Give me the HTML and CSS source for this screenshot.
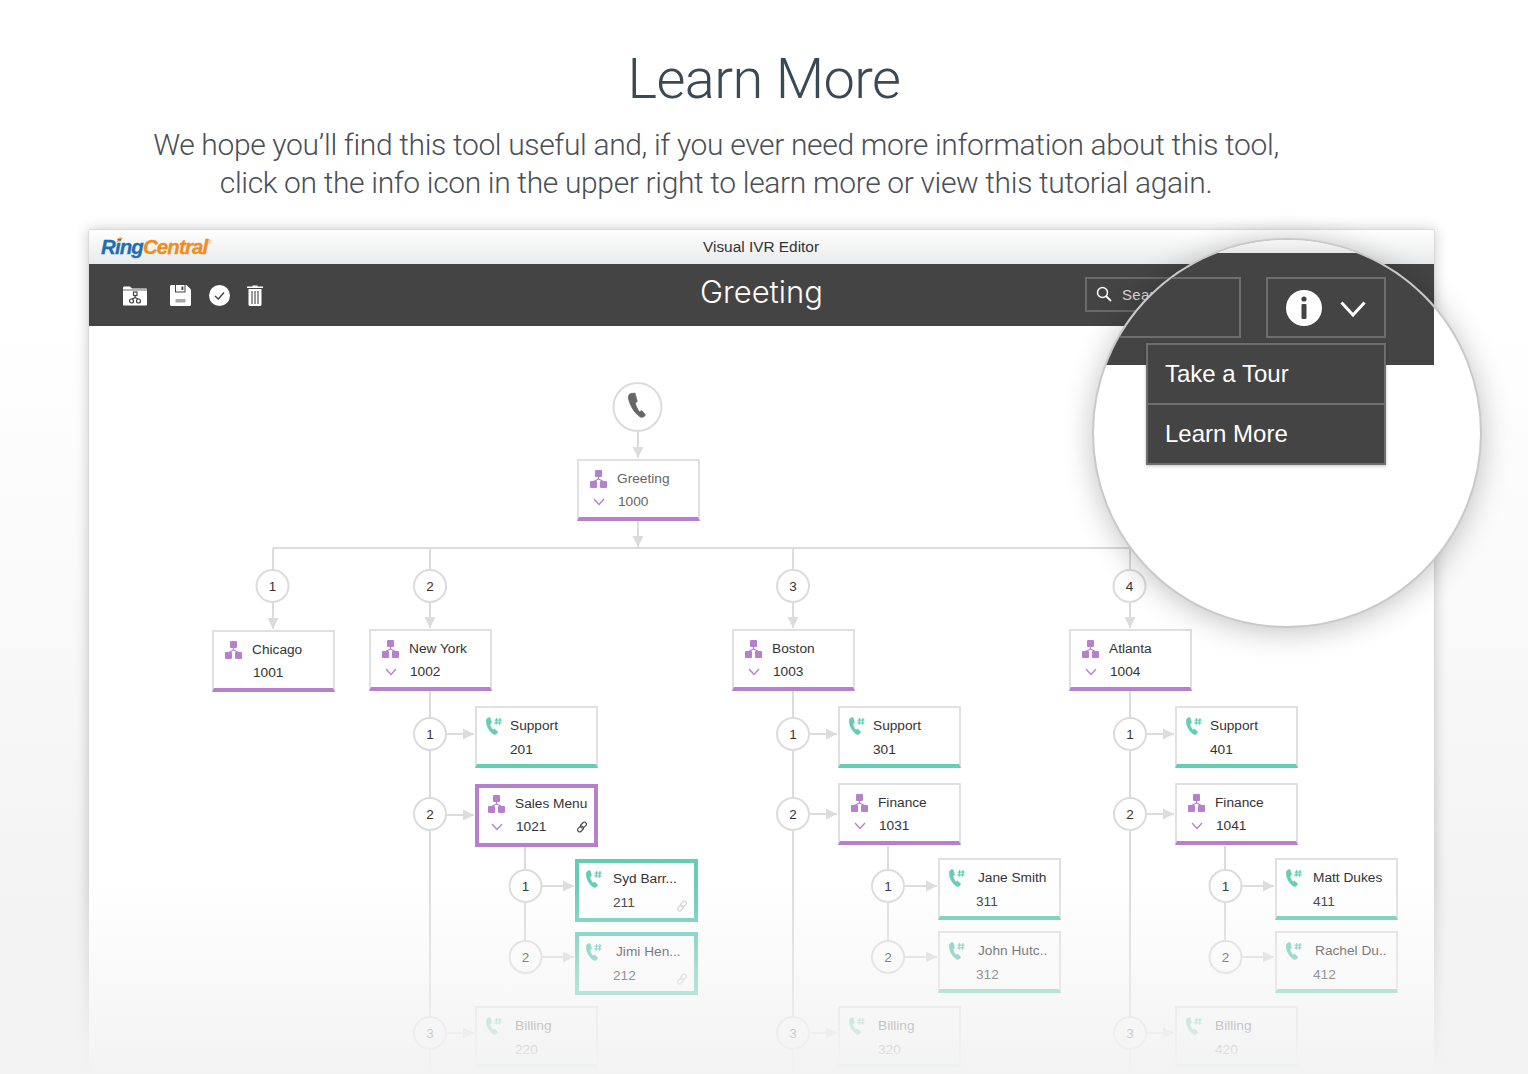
FILE: index.html
```html
<!DOCTYPE html>
<html lang="en">
<head>
    <meta charset="UTF-8">
    <title>Learn More</title>
    <link rel="stylesheet" href="styles.css">
</head>
<body>
    <svg class="defs" width="0" height="0">
        <defs>
            <symbol id="i-org" viewBox="0 0 17 18">
                <rect x="5" y="0" width="7" height="7" rx="1"/>
                <rect x="0" y="11" width="7" height="7" rx="1"/>
                <rect x="10" y="11" width="7" height="7" rx="1"/>
                <path d="M8.5 7V9M8.5 9L3.5 11.5M8.5 9L13.5 11.5" fill="none" stroke="currentColor" stroke-width="1.2"/>
            </symbol>
            <symbol id="i-chev" viewBox="0 0 12 8">
                <path d="M1 1L6 6.5L11 1" fill="none" stroke="currentColor" stroke-width="1.3"/>
            </symbol>
            <symbol id="i-ext" viewBox="0 0 16 18">
                <path d="M2.6 0.5C1 1.2 0 2.600 0.2 5C0.8 10 3.600 14.600 7.600 17.200C9 18 10.600 17.400 11.600 15.600C11.800 15.200 11.700 14.900 11.400 14.600L8.800 12.200C8.500 12 8.200 12 7.900 12.200L6.900 13C5.400 11.200 4.300 9 3.900 7L5.200 6.200C5.500 6 5.600 5.700 5.500 5.400L4.400 1C4.200 .5 3.200 .2 2.600 .5Z" stroke="currentColor" stroke-width=".5"/>
                <path d="M10.600 1L10.100 7.800M14 1L13.500 7.800M8.600 3.200H15.600M8.400 5.800H15.400" fill="none" stroke="currentColor" stroke-width="1.200"/>
            </symbol>
            <symbol id="i-link" viewBox="0 0 12 12">
                <g fill="none" stroke="currentColor" stroke-width="1.1">
                    <rect x="5.5" y="0.8" width="4" height="6.5" rx="2" transform="rotate(45 7.5 4)"/>
                    <rect x="2.5" y="4.7" width="4" height="6.5" rx="2" transform="rotate(45 4.5 8)"/>
                </g>
            </symbol>
            <marker id="arrow" markerUnits="userSpaceOnUse" markerWidth="12" markerHeight="12" refX="11" refY="6" orient="auto">
                <path d="M0 0.5L11 6L0 11.5Z" fill="#dcdcdc"/>
            </marker>
        </defs>
    </svg>

    <header class="intro">
        <h1>Learn More</h1>
        <p>We hope you’ll find this tool useful and, if you ever need more information about this tool,<br>click on the info icon in the upper right to learn more or view this tutorial again.</p>
    </header>

    <section class="window">
        <div class="titlebar">
            <div class="logo">
                <span class="logo-ring">Ring</span><span class="logo-central">Central</span><sup class="logo-reg">®</sup>
                <svg class="logo-waves" viewBox="0 0 8 6"><path d="M1 5C1.500 3.500 3 3 4.500 3.500M1 3C2 1 4 .6 6.500 1.500" fill="none" stroke="#f08c1e" stroke-width="1"/></svg>
            </div>
            <div class="window-title">Visual IVR Editor</div>
        </div>

        <div class="toolbar">
            <div class="tools">
                <svg class="tool tool-folder" viewBox="0 0 24 20">
                    <path d="M0 2.5C0 1.500.5 1 1.500 1H7L9 3H23C23.600 3 24 3.400 24 4V19C24 19.600 23.600 20 23 20H1C.4 20 0 19.600 0 19Z" fill="#fff"/>
                    <path d="M0 4.500H24" stroke="#444" stroke-width=".8"/>
                    <g fill="none" stroke="#444" stroke-width="1.200">
                        <rect x="10.500" y="6.500" width="3.500" height="3.500"/>
                        <circle cx="8.500" cy="15.500" r="2"/>
                        <circle cx="15.500" cy="15.500" r="2"/>
                        <path d="M12.200 10V12M12.200 12L9 13.600M12.200 12L15 13.600"/>
                    </g>
                </svg>
                <svg class="tool tool-save" viewBox="0 0 21 21">
                    <path d="M1.500 0H16.500L21 4.500V19.500C21 20.300 20.300 21 19.500 21H1.500C.7 21 0 20.300 0 19.500V1.500C0 .7 .7 0 1.500 0Z" fill="#fff"/>
                    <path d="M5 0H15.500V7.500H5Z" fill="#444"/>
                    <path d="M6 0H14.500V6.500H6Z" fill="#fff"/>
                    <rect x="11.500" y="1.500" width="1.800" height="3.500" fill="#444"/>
                    <rect x="5.500" y="14" width="10" height="3.500" fill="#a8a8a8"/>
                </svg>
                <svg class="tool tool-check" viewBox="0 0 21 21">
                    <circle cx="10.500" cy="10.500" r="10.500" fill="#fff"/>
                    <path d="M6 11L9.300 14L15 7.500" fill="none" stroke="#444" stroke-width="1.400"/>
                </svg>
                <svg class="tool tool-trash" viewBox="0 0 16 21">
                    <path d="M5.500 1.500V.5H10.500V1.500H16V3H0V1.500Z" fill="#fff"/>
                    <path d="M1.500 4H14.500V19.500C14.500 20.300 13.800 21 13 21H3C2.200 21 1.500 20.300 1.500 19.500Z" fill="#fff"/>
                    <path d="M5 6V19M8 6V19M11 6V19" stroke="#444" stroke-width="1.100"/>
                </svg>
            </div>
            <div class="toolbar-title">Greeting</div>
            <div class="toolbar-right">
                <div class="search">
                    <svg class="search-icon" viewBox="0 0 16 16"><circle cx="6.500" cy="6.500" r="5" fill="none" stroke="#fff" stroke-width="1.500"/><path d="M10 10L15 15" stroke="#fff" stroke-width="1.800"/></svg>
                    <span>Search</span>
                </div>
            </div>
        </div>

        <div class="diagram">
            <svg class="wires" viewBox="89 327 1345 747" width="1345" height="747">
                <g class="lines">
                    <path d="M638 431V458" marker-end="url(#arrow)"/>
                    <path d="M638 521V547" marker-end="url(#arrow)"/>
                    <path d="M273 548H1130"/>
                    <path d="M273 548V629" marker-end="url(#arrow)"/>
                    <path d="M430 548V628" marker-end="url(#arrow)"/>
                    <path d="M793 548V628" marker-end="url(#arrow)"/>
                    <path d="M1130 548V628" marker-end="url(#arrow)"/>

                    <path d="M430 691V1074M793 691V1074M1130 691V1074"/>
                    <path d="M525 847V957M888 846V957M1225 846V957"/>

                    <path d="M430 734H474" marker-end="url(#arrow)"/>
                    <path d="M430 815H474" marker-end="url(#arrow)"/>
                    <path d="M430 1033H474" marker-end="url(#arrow)"/>
                    <path d="M525 886H574" marker-end="url(#arrow)"/>
                    <path d="M525 957H574" marker-end="url(#arrow)"/>

                    <path d="M793 734H837" marker-end="url(#arrow)"/>
                    <path d="M793 814H837" marker-end="url(#arrow)"/>
                    <path d="M793 1033H837" marker-end="url(#arrow)"/>
                    <path d="M888 886H937" marker-end="url(#arrow)"/>
                    <path d="M888 957H937" marker-end="url(#arrow)"/>

                    <path d="M1130 734H1174" marker-end="url(#arrow)"/>
                    <path d="M1130 814H1174" marker-end="url(#arrow)"/>
                    <path d="M1130 1033H1174" marker-end="url(#arrow)"/>
                    <path d="M1225 886H1274" marker-end="url(#arrow)"/>
                    <path d="M1225 957H1274" marker-end="url(#arrow)"/>
                </g>

                <circle class="stop" cx="637.500" cy="407" r="24"/>
                <path d="M630.500 393.500C628.500 394.500 627.800 396.500 628.500 399C630 405.500 634 412.500 639.500 416.500C641.500 418 644 417.500 645.500 415L641.800 410.500L639.500 411.800C637.500 409 636 406 635.300 403L637.300 401.500L635 393Z" fill="#666" stroke="#666" stroke-width=".6"/>

                <g class="stops">
                    <g><circle cx="272.500" cy="586" r="16"/><text x="272.500" y="591">1</text></g>
                    <g><circle cx="430" cy="586" r="16"/><text x="430" y="591">2</text></g>
                    <g><circle cx="793" cy="586" r="16"/><text x="793" y="591">3</text></g>
                    <g><circle cx="1129.500" cy="586" r="16"/><text x="1129.500" y="591">4</text></g>

                    <g><circle cx="430" cy="734" r="16"/><text x="430" y="739">1</text></g>
                    <g><circle cx="430" cy="814" r="16"/><text x="430" y="819">2</text></g>
                    <g><circle cx="430" cy="1033" r="16"/><text x="430" y="1038">3</text></g>
                    <g><circle cx="525.500" cy="886" r="16"/><text x="525.500" y="891">1</text></g>
                    <g><circle cx="525.500" cy="957" r="16"/><text x="525.500" y="962">2</text></g>

                    <g><circle cx="793" cy="734" r="16"/><text x="793" y="739">1</text></g>
                    <g><circle cx="793" cy="814" r="16"/><text x="793" y="819">2</text></g>
                    <g><circle cx="793" cy="1033" r="16"/><text x="793" y="1038">3</text></g>
                    <g><circle cx="888" cy="886" r="16"/><text x="888" y="891">1</text></g>
                    <g><circle cx="888" cy="957" r="16"/><text x="888" y="962">2</text></g>

                    <g><circle cx="1130" cy="734" r="16"/><text x="1130" y="739">1</text></g>
                    <g><circle cx="1130" cy="814" r="16"/><text x="1130" y="819">2</text></g>
                    <g><circle cx="1130" cy="1033" r="16"/><text x="1130" y="1038">3</text></g>
                    <g><circle cx="1225.500" cy="886" r="16"/><text x="1225.500" y="891">1</text></g>
                    <g><circle cx="1225.500" cy="957" r="16"/><text x="1225.500" y="962">2</text></g>
                </g>
            </svg>

            <div class="node menu" style="left:488px;top:132px"><svg class="ico"><use href="#i-org"/></svg><span class="name soft">Greeting</span><svg class="chev"><use href="#i-chev"/></svg><span class="ext soft">1000</span></div>

            <div class="node menu" style="left:123px;top:303px"><svg class="ico"><use href="#i-org"/></svg><span class="name">Chicago</span><span class="ext">1001</span></div>
            <div class="node menu" style="left:280px;top:302px"><svg class="ico"><use href="#i-org"/></svg><span class="name">New York</span><svg class="chev"><use href="#i-chev"/></svg><span class="ext">1002</span></div>
            <div class="node menu" style="left:643px;top:302px"><svg class="ico"><use href="#i-org"/></svg><span class="name">Boston</span><svg class="chev"><use href="#i-chev"/></svg><span class="ext">1003</span></div>
            <div class="node menu" style="left:980px;top:302px"><svg class="ico"><use href="#i-org"/></svg><span class="name">Atlanta</span><svg class="chev"><use href="#i-chev"/></svg><span class="ext">1004</span></div>

            <div class="node user" style="left:386px;top:379px"><svg class="ico"><use href="#i-ext"/></svg><span class="name">Support</span><span class="ext">201</span></div>
            <div class="node menu picked" style="left:386px;top:457px"><svg class="ico"><use href="#i-org"/></svg><span class="name">Sales Menu</span><svg class="chev"><use href="#i-chev"/></svg><span class="ext">1021</span><svg class="link"><use href="#i-link"/></svg></div>
            <div class="node user picked" style="left:486px;top:532px"><svg class="ico"><use href="#i-ext"/></svg><span class="name">Syd Barr...</span><span class="ext">211</span><svg class="link faint"><use href="#i-link"/></svg></div>
            <div class="node user picked" style="left:486px;top:605px"><svg class="ico"><use href="#i-ext"/></svg><span class="name far">Jimi Hen...</span><span class="ext">212</span><svg class="link faint"><use href="#i-link"/></svg></div>
            <div class="node user" style="left:386px;top:679px"><svg class="ico"><use href="#i-ext"/></svg><span class="name farther">Billing</span><span class="ext farther">220</span></div>

            <div class="node user" style="left:749px;top:379px"><svg class="ico"><use href="#i-ext"/></svg><span class="name">Support</span><span class="ext">301</span></div>
            <div class="node menu" style="left:749px;top:456px"><svg class="ico"><use href="#i-org"/></svg><span class="name">Finance</span><svg class="chev"><use href="#i-chev"/></svg><span class="ext">1031</span></div>
            <div class="node user" style="left:849px;top:531px"><svg class="ico"><use href="#i-ext"/></svg><span class="name farther">Jane Smith</span><span class="ext far">311</span></div>
            <div class="node user" style="left:849px;top:604px"><svg class="ico"><use href="#i-ext"/></svg><span class="name farther">John Hutc..</span><span class="ext far">312</span></div>
            <div class="node user" style="left:749px;top:679px"><svg class="ico"><use href="#i-ext"/></svg><span class="name farther">Billing</span><span class="ext farther">320</span></div>

            <div class="node user" style="left:1086px;top:379px"><svg class="ico"><use href="#i-ext"/></svg><span class="name">Support</span><span class="ext">401</span></div>
            <div class="node menu" style="left:1086px;top:456px"><svg class="ico"><use href="#i-org"/></svg><span class="name">Finance</span><svg class="chev"><use href="#i-chev"/></svg><span class="ext">1041</span></div>
            <div class="node user" style="left:1186px;top:531px"><svg class="ico"><use href="#i-ext"/></svg><span class="name far">Matt Dukes</span><span class="ext far">411</span></div>
            <div class="node user" style="left:1186px;top:604px"><svg class="ico"><use href="#i-ext"/></svg><span class="name farther">Rachel Du..</span><span class="ext far">412</span></div>
            <div class="node user" style="left:1086px;top:679px"><svg class="ico"><use href="#i-ext"/></svg><span class="name farther">Billing</span><span class="ext farther">420</span></div>
        </div>
    </section>

    <div class="fade"></div>

    <!-- magnified corner of the toolbar -->
    <div class="lens">
        <div class="lens-strip"></div>
        <div class="lens-band">
            <div class="lens-search"></div>
            <div class="lens-info">
                <svg class="info-icon" viewBox="0 0 36 36">
                    <circle cx="18" cy="18" r="18" fill="#fff"/>
                    <circle cx="18" cy="9" r="2.600" fill="#444"/>
                    <rect x="15.500" y="14" width="5" height="15" rx="1" fill="#444"/>
                </svg>
                <svg class="info-chev" viewBox="0 0 26 16"><path d="M1.500 1.500L13 14L24.500 1.500" fill="none" stroke="#fff" stroke-width="3"/></svg>
            </div>
        </div>
        <div class="lens-menu">
            <div class="lens-item">Take a Tour</div>
            <div class="lens-item">Learn More</div>
        </div>
    </div>
</body>
</html>
```

FILE: styles.css
```css
* {
    box-sizing: border-box;
}
html, body {
    margin: 0;
    padding: 0;
}
body {
    position: relative;
    width: 1528px;
    height: 1074px;
    overflow: hidden;
    background: linear-gradient(to bottom, #ffffff 30%, #f3f3f3 85%);
    font-family: "Liberation Sans", Arial, sans-serif;
    color: #444;
}
.defs {
    position: absolute;
}

.intro {
    height: 229px;
    padding-top: 43px;
    text-align: center;
}
.intro h1 {
    margin: 0;
    font-family: Roboto, sans-serif;
    font-weight: 300;
    font-size: 56px;
    line-height: 72px;
    letter-spacing: -0.6px;
    color: #3a4956;
}
.intro p {
    margin: 11px 96px 0 0;
    font-family: Roboto, sans-serif;
    font-weight: 300;
    font-size: 30px;
    line-height: 38px;
    letter-spacing: -0.35px;
    color: #4a4f55;
}

.window {
    width: 1347px;
    height: 845px;
    margin-left: 88px;
    background: #fff;
    border: 1px solid #d9d9d9;
    border-bottom: 0;
    border-radius: 3px 3px 0 0;
    box-shadow: 0 0 14px rgba(0, 0, 0, 0.2);
}
.titlebar {
    position: relative;
    display: flex;
    align-items: center;
    justify-content: center;
    height: 34px;
    background: linear-gradient(to bottom, #ffffff, #e9eaeb);
}
.logo {
    position: absolute;
    left: 12px;
    top: 6px;
    font-size: 20.500px;
    line-height: 22px;
    font-weight: bold;
    font-style: italic;
    letter-spacing: -0.9px;
    -webkit-text-stroke: 0.3px;
}
.logo-ring {
    color: #1f6db3;
}
.logo-central {
    color: #f08c1e;
}
.logo-reg {
    font-size: 6px;
    font-weight: normal;
    color: #f08c1e;
    vertical-align: 10px;
    line-height: 0;
    -webkit-text-stroke: 0;
}
.logo-waves {
    position: absolute;
    left: 15px;
    top: 1px;
    width: 8px;
    height: 6px;
}
.window-title {
    font-size: 15.400px;
    color: #333;
    margin-top: -1px;
    margin-right: 1px;
}

.toolbar {
    display: grid;
    grid-template-columns: 1fr auto 1fr;
    align-items: center;
    height: 62px;
    background: #444;
}
.tools {
    display: flex;
    align-items: center;
    padding-left: 34px;
}
.tool {
    display: block;
    height: 21px;
}
.tool-folder {
    width: 24px;
    margin-right: 23px;
}
.tool-save {
    width: 21px;
    margin-right: 18px;
}
.tool-check {
    width: 21px;
    margin-right: 17px;
}
.tool-trash {
    width: 16px;
}
.toolbar-title {
    font-family: Inter, sans-serif;
    font-weight: 300;
    font-size: 31px;
    color: #fff;
    margin-top: -8px;
}
.toolbar-right {
    display: flex;
    justify-content: flex-end;
    padding-right: 192px;
}
.search {
    display: flex;
    align-items: center;
    gap: 10px;
    width: 157px;
    height: 35px;
    margin-top: -2px;
    padding-left: 9px;
    border: 2px solid #6a6a6a;
    font-size: 15px;
    letter-spacing: 0.3px;
    color: #d8d8d8;
}
.search-icon {
    width: 16px;
    height: 16px;
}

.diagram {
    position: relative;
    height: 747px;
    margin-top: 1px;
    overflow: hidden;
}
.wires {
    position: absolute;
    left: 0;
    top: 0;
}
.lines path {
    fill: none;
    stroke: #dcdcdc;
    stroke-width: 2;
}
.stop, .stops circle {
    fill: #fff;
    stroke: #dcdcdc;
    stroke-width: 2;
}
.stops text {
    font-family: "Liberation Sans", Arial, sans-serif;
    font-size: 13.500px;
    text-anchor: middle;
    fill: #333;
}

.node {
    position: absolute;
    display: grid;
    grid-template-rows: 23px 23px;
    width: 123px;
    height: 62px;
    padding-top: 6px;
    background: #fff;
    border: 2px solid #e0e0e0;
    border-bottom-width: 4px;
    font-size: 13.700px;
    line-height: 23px;
    color: #333;
}
.node .ico {
    grid-column: 1;
    grid-row: 1;
    width: 17px;
    height: 18px;
    align-self: center;
}
.node .chev {
    grid-column: 1;
    grid-row: 2;
    width: 12px;
    height: 8px;
    margin-left: 3px;
    align-self: center;
}
.node .name {
    grid-column: 2;
    grid-row: 1;
    white-space: nowrap;
}
.node .ext {
    grid-column: 2;
    grid-row: 2;
    padding-left: 1px;
}
.node .soft {
    color: #666;
}
.menu {
    grid-template-columns: 27px 1fr;
    padding-left: 11px;
    border-bottom-color: #b580cc;
    color: #333;
}
.menu .ico, .menu .chev {
    color: #b580cc;
    fill: #b580cc;
}
.user {
    grid-template-columns: 24px 1fr;
    grid-template-rows: 23px 26px;
    padding-left: 9px;
    border-bottom-color: #66cdb5;
}
.user .ico {
    width: 16px;
    color: #66cdb5;
    fill: #66cdb5;
}
.user .ext {
    padding-left: 0;
    line-height: 25px;
}
.user .far {
    padding-left: 3px;
}
.user .farther {
    padding-left: 5px;
}
.picked {
    height: 63px;
    border-width: 4px;
    padding-top: 4px;
}
.menu.picked {
    border-color: #b580cc;
    padding-left: 9px;
}
.user.picked {
    border-color: #66cdb5;
    grid-template-columns: 27px 1fr;
    padding-left: 7px;
}
.link {
    position: absolute;
    right: 6px;
    bottom: 6px;
    width: 12px;
    height: 12px;
    color: #444;
}
.menu .link {
    bottom: 10px;
}
.link.faint {
    color: #cfcfcf;
}

.fade {
    position: absolute;
    left: 0;
    right: 0;
    bottom: 0;
    height: 194px;
    background: linear-gradient(to bottom, rgba(243, 243, 243, 0), #f3f3f3);
}

.lens {
    position: absolute;
    left: 1092px;
    top: 238px;
    width: 390px;
    height: 390px;
    border: 2px solid #c9c9c9;
    border-radius: 50%;
    overflow: hidden;
    background: #fff;
    box-shadow: 0 4px 30px rgba(0, 0, 0, 0.24);
}
.lens-strip {
    width: 340px;
    height: 13px;
    background: linear-gradient(to bottom, #f6f6f6, #e6e6e6);
}
.lens-band {
    display: flex;
    justify-content: flex-end;
    gap: 25px;
    width: 340px;
    height: 112px;
    padding: 24px 48px 0 0;
    background: #444;
}
.lens-search {
    flex: none;
    width: 220px;
    height: 61px;
    border: 2px solid #6e6e6e;
}
.lens-info {
    flex: none;
    display: flex;
    align-items: center;
    justify-content: center;
    gap: 18px;
    width: 120px;
    height: 61px;
    border: 2px solid #6e6e6e;
}
.info-icon {
    width: 36px;
    height: 36px;
}
.info-chev {
    width: 26px;
    height: 16px;
    margin-top: 3px;
}
.lens-menu {
    position: absolute;
    left: 52px;
    top: 103px;
    width: 240px;
    background: #444;
    border: 2px solid #6e6e6e;
    box-shadow: 0 1px 3px rgba(0, 0, 0, 0.25);
}
.lens-item {
    height: 58px;
    padding-left: 17px;
    font-size: 24px;
    line-height: 58px;
    color: #fff;
}
.lens-item + .lens-item {
    border-top: 2px solid #6e6e6e;
    height: 60px;
    line-height: 57px;
}
```
